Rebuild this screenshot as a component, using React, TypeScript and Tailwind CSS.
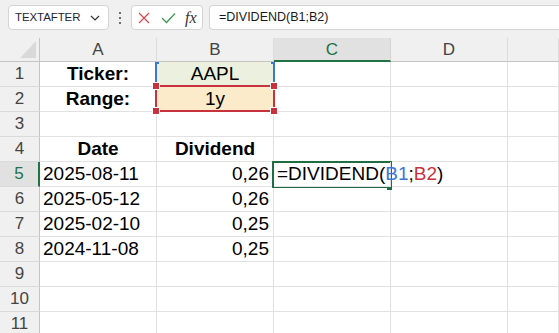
import React from "react";

const F = { fontFamily: '"Liberation Sans", Arial, sans-serif' };

type Cell = { text?: React.ReactNode; align?: "left" | "center" | "right"; bold?: boolean; bg?: string };

const rows: Cell[][] = [
  [{ text: "Ticker:", align: "center", bold: true }, { text: "AAPL", align: "center", bg: "bg-[#ebf1de]" }, {}, {}, {}],
  [{ text: "Range:", align: "center", bold: true }, { text: "1y", align: "center", bg: "bg-[#fcebcb]" }, {}, {}, {}],
  [{}, {}, {}, {}, {}],
  [{ text: "Date", align: "center", bold: true }, { text: "Dividend", align: "center", bold: true }, {}, {}, {}],
  [
    { text: "2025-08-11" },
    { text: "0,26", align: "right" },
    {
      text: (
        <span>
          =DIVIDEND(<span className="text-[#3b78d6]">B1</span>;<span className="text-[#c8323c]">B2</span>)
        </span>
      ),
    },
    {},
    {},
  ],
  [{ text: "2025-05-12" }, { text: "0,26", align: "right" }, {}, {}, {}],
  [{ text: "2025-02-10" }, { text: "0,25", align: "right" }, {}, {}, {}],
  [{ text: "2024-11-08" }, { text: "0,25", align: "right" }, {}, {}, {}],
  [{}, {}, {}, {}, {}],
  [{}, {}, {}, {}, {}],
  [{}, {}, {}, {}, {}],
];

const cols = ["A", "B", "C", "D", ""];

export default function App() {
  return (
    <div className="w-[559px] h-[333px] overflow-hidden bg-[#f0f0f0]" style={F}>
      {/* Toolbar */}
      <div className="h-[38px] flex items-start pt-[5px] pl-[8px] gap-0">
        <div className="w-[101px] h-[25px] bg-white border border-[#d4d4d4] rounded-[4px] flex items-center pl-[6px] pr-[6px] justify-between">
          <span className="text-[11.5px] text-[#1f2533] tracking-[-0.1px]">TEXTAFTER</span>
          <svg width="10" height="6" viewBox="0 0 10 6" className="mr-[2px]">
            <path d="M1 1 L5 5 L9 1" fill="none" stroke="#333" strokeWidth="1.2" />
          </svg>
        </div>
        <div className="w-[22px] h-[25px] flex flex-col items-center justify-center gap-[3px]">
          <div className="w-[2px] h-[2px] bg-[#444] rounded-full" />
          <div className="w-[2px] h-[2px] bg-[#444] rounded-full" />
          <div className="w-[2px] h-[2px] bg-[#444] rounded-full" />
        </div>
        <div className="w-[72px] h-[25px] bg-white border border-[#d4d4d4] rounded-[4px] flex items-center pl-[6px] gap-[11px]">
          <svg width="12" height="12" viewBox="0 0 12 12">
            <path d="M1 1 L11 11 M11 1 L1 11" stroke="#e0484f" strokeWidth="1.3" fill="none" />
          </svg>
          <svg width="15" height="12" viewBox="0 0 15 12">
            <path d="M1 6 L5.5 10.5 L14 1.5" stroke="#3e9a52" strokeWidth="1.3" fill="none" />
          </svg>
          <span className="text-[16px] italic text-[#333] leading-none -ml-[2px]" style={{ fontFamily: '"Liberation Serif", "Times New Roman", serif' }}>
            fx
          </span>
        </div>
        <div className="ml-[6px] flex-1 h-[25px] bg-white border border-[#d4d4d4] border-r-0 rounded-l-[4px] flex items-center pl-[9px]">
          <span className="text-[12.5px] text-[#1a1a1a]">=DIVIDEND(B1;B2)</span>
        </div>
      </div>

      {/* Grid */}
      <div className="relative bg-white">
        <div className="grid grid-cols-[40px_117px_117px_117px_117px_1fr]">
          {/* header row */}
          <div className="h-[24px] bg-[#f0f0f0] border-r border-b border-[#c4c4c4] relative overflow-hidden">
            <svg width="40" height="24" className="absolute inset-0">
              <polygon points="36,3 36,20 20,20" fill="#d9d9d9" />
            </svg>
          </div>
          {cols.map((c, i) => (
            <div
              key={i}
              className={
                i === 2
                  ? "h-[24px] bg-[#e1e1e1] border-r border-[#d4d4d4] border-b-2 border-b-[#217346] flex items-center justify-center text-[17px] text-[#217346]"
                  : "h-[24px] bg-[#f0f0f0] border-r border-[#dcdcdc] border-b border-b-[#c4c4c4] flex items-center justify-center text-[17px] text-[#444]"
              }
            >
              <span className="pt-[1px]">{c}</span>
            </div>
          ))}
          {rows.map((r, ri) => (
            <React.Fragment key={ri}>
              <div
                className={
                  ri === 4
                    ? "h-[25px] bg-[#e1e1e1] border-r-2 border-r-[#217346] border-b border-[#dadada] flex items-center justify-center text-[17px] text-[#217346]"
                    : "h-[25px] bg-[#f0f0f0] border-r border-r-[#c4c4c4] border-b border-[#dadada] flex items-center justify-center text-[17px] text-[#444]"
                }
              >
                {ri + 1}
              </div>
              {r.map((c, ci) => (
                <div
                  key={ci}
                  className={
                    "h-[25px] border-r border-b border-[#e1e1e1] flex items-center whitespace-nowrap text-[19px] text-black leading-none pb-[2px] " +
                    (ri === 4 && ci === 2 ? "bg-transparent " : c.bg ? c.bg + " " : "bg-white ") +
                    (c.bold ? "font-bold " : "") +
                    (c.align === "center"
                      ? "justify-center "
                      : c.align === "right"
                      ? "justify-end pr-[4px] "
                      : "justify-start pl-[3px] ") +
                    (ri === 4 && ci === 2 ? "relative z-30 overflow-visible pl-[3px]" : "overflow-hidden")
                  }
                >
                  {c.text}
                </div>
              ))}
            </React.Fragment>
          ))}
        </div>

        {/* B1 range highlight (blue) */}
        <div className="absolute left-[155px] top-[24px] w-[2px] h-[23px] bg-[#3b78d6]" />
        <div className="absolute left-[273px] top-[24px] w-[2px] h-[23px] bg-[#3b78d6]" />
        <div className="absolute left-[155px] top-[24px] w-[4px] h-[2px] bg-[#3b78d6]" />
        <div className="absolute left-[271px] top-[24px] w-[4px] h-[2px] bg-[#3b78d6]" />

        {/* B2 range highlight (red) */}
        <div className="absolute left-[155px] top-[47px] w-[120px] h-[27px] border-2 border-[#c8323c]" />
        <div className="absolute left-[153px] top-[45px] w-[6px] h-[6px] bg-[#c8323c] outline outline-1 outline-white" />
        <div className="absolute left-[271px] top-[45px] w-[6px] h-[6px] bg-[#c8323c] outline outline-1 outline-white" />
        <div className="absolute left-[153px] top-[70px] w-[6px] h-[6px] bg-[#c8323c] outline outline-1 outline-white" />
        <div className="absolute left-[271px] top-[70px] w-[6px] h-[6px] bg-[#c8323c] outline outline-1 outline-white" />

        {/* C5 edit border */}
        <div className="absolute left-[272px] top-[123px] w-[120px] h-[27px] border-2 border-[#1e6e42] z-20 pointer-events-none" />
        <div className="absolute left-[387px] top-[148px] w-[5px] h-[4px] bg-[#1e6e42] z-20" />
      </div>
    </div>
  );
}
